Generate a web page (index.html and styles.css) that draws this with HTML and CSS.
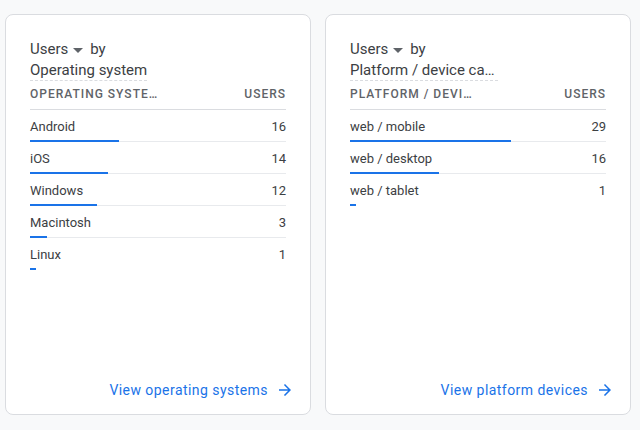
FILE: index.html
```html
<!DOCTYPE html>
<html>
<head>
<meta charset="utf-8">
<link rel="stylesheet" href="styles.css">
</head>
<body>
<div class="cards">
  <section class="card">
    <div class="title">
      <div class="line1"><span>Users</span><svg class="drop" width="10" height="5" viewBox="0 0 10 5"><path d="M0 0l5 5 5-5z" fill="#5f6368"/></svg><span>by</span></div>
      <div class="line2"><span class="dim">Operating system</span></div>
    </div>
    <div class="thead">
      <div class="th name">Operating system</div>
      <div class="th">Users</div>
    </div>
    <div class="row"><div class="cells"><span>Android</span><span>16</span></div><div class="bar" style="width:34.78%"></div></div>
    <div class="row"><div class="cells"><span>iOS</span><span>14</span></div><div class="bar" style="width:30.43%"></div></div>
    <div class="row"><div class="cells"><span>Windows</span><span>12</span></div><div class="bar" style="width:26.09%"></div></div>
    <div class="row"><div class="cells"><span>Macintosh</span><span>3</span></div><div class="bar" style="width:6.52%"></div></div>
    <div class="row last"><div class="cells"><span>Linux</span><span>1</span></div><div class="bar" style="width:2.17%"></div></div>
    <div class="footer">
      <a class="link">View operating systems<svg class="arrow" width="18" height="18" viewBox="0 0 24 24"><path d="M12 4l-1.41 1.41L16.17 11H4v2h12.170l-5.58 5.59L12 20l8-8z" fill="#1a73e8"/></svg></a>
    </div>
  </section>
  <section class="card">
    <div class="title">
      <div class="line1"><span>Users</span><svg class="drop" width="10" height="5" viewBox="0 0 10 5"><path d="M0 0l5 5 5-5z" fill="#5f6368"/></svg><span>by</span></div>
      <div class="line2"><span class="dim trunc">Platform / device category</span></div>
    </div>
    <div class="thead">
      <div class="th name">Platform / device category</div>
      <div class="th">Users</div>
    </div>
    <div class="row"><div class="cells"><span>web / mobile</span><span>29</span></div><div class="bar" style="width:63.04%"></div></div>
    <div class="row"><div class="cells"><span>web / desktop</span><span>16</span></div><div class="bar" style="width:34.78%"></div></div>
    <div class="row last"><div class="cells"><span>web / tablet</span><span>1</span></div><div class="bar" style="width:2.17%"></div></div>
    <div class="footer">
      <a class="link">View platform devices<svg class="arrow" width="18" height="18" viewBox="0 0 24 24"><path d="M12 4l-1.41 1.41L16.17 11H4v2h12.17l-5.58 5.59L12 20l8-8z" fill="#1a73e8"/></svg></a>
    </div>
  </section>
</div>
</body>
</html>
```
FILE: styles.css
```css
html, body {
  margin: 0;
  padding: 0;
  background: #f8f9fa;
  font-family: Roboto, "Liberation Sans", sans-serif;
  color: #3c4043;
}
.cards {
  display: flex;
  gap: 14px;
  padding: 14px 0 0 5px;
}
.card {
  box-sizing: border-box;
  width: 306px;
  height: 401px;
  background: #fff;
  border: 1px solid #dadce0;
  border-radius: 8px;
  padding: 24px 24px 0 24px;
  display: flex;
  flex-direction: column;
}
.title {
  font-size: 15px;
  color: #3c4043;
}
.line1 {
  display: flex;
  align-items: center;
  line-height: 21px;
}
.drop {
  margin: 1px 7px 0 5px;
}
.line2 {
  display: flex;
  margin-top: 0;
}
.dim {
  border-bottom: 1px dashed #dadce0;
  line-height: 20px;
}
.trunc {
  display: block;
  max-width: 148px;
  white-space: nowrap;
  overflow: hidden;
  text-overflow: ellipsis;
}
.thead {
  display: flex;
  justify-content: space-between;
  align-items: flex-start;
  padding: 5px 0 7px;
  border-bottom: 1px solid #dadce0;
}
.th {
  font-size: 12px;
  line-height: 16px;
  font-weight: 500;
  letter-spacing: 1px;
  text-transform: uppercase;
  color: #5f6368;
  white-space: nowrap;
}
.th.name {
  max-width: 128px;
  overflow: hidden;
  text-overflow: ellipsis;
}
.row {
  padding-top: 7px;
  border-bottom: 1px solid #e8eaed;
}
.row.last {
  border-bottom-color: transparent;
}
.cells {
  display: flex;
  justify-content: space-between;
  font-size: 13px;
  line-height: 20px;
  font-weight: 400;
  color: #3c4043;
}
.bar {
  height: 2px;
  margin-top: 3px;
  margin-bottom: -1px;
  background: #1a73e8;
  position: relative;
}
.footer {
  margin-top: auto;
  margin-bottom: 6px;
  margin-right: -8px;
  height: 36px;
  display: flex;
  justify-content: flex-end;
  align-items: center;
}
.link {
  display: flex;
  align-items: center;
  gap: 8px;
  color: #1a73e8;
  font-size: 14px;
  letter-spacing: 0.45px;
  text-decoration: none;
}
```
